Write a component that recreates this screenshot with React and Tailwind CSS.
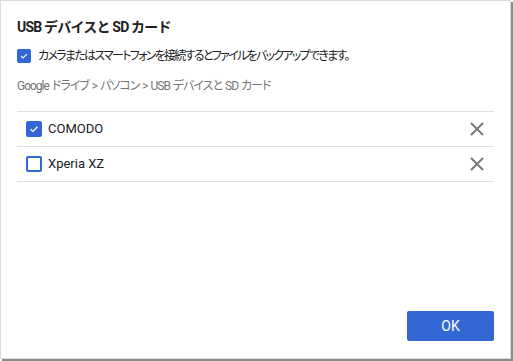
import React, { useState } from 'react';

const font = { fontFamily: 'Roboto, "Noto Sans CJK JP", sans-serif' };

const CheckIcon = () => (
  <svg viewBox="0 0 16 16" className="w-full h-full">
    <path d="M3.5 8.2 L6.6 11.2 L12.6 5" fill="none" stroke="white" strokeWidth="1.8" />
  </svg>
);

const Box = ({ checked, size }) => (
  <div
    className={`${size} rounded-[2px] border-2 border-[#3367d6] flex items-center justify-center ${checked ? 'bg-[#3367d6]' : 'bg-white'}`}
  >
    {checked && <CheckIcon />}
  </div>
);

const Row = ({ label, checked, onToggle }) => (
  <div className="h-[35px] border-b border-[#e0e0e0] flex items-center pl-[9px] pr-[10px]">
    <button onClick={onToggle} className="shrink-0">
      <Box checked={checked} size="w-4 h-4" />
    </button>
    <span className="ml-[6px] text-[13px] text-[#202124] flex-1">{label}</span>
    <svg viewBox="0 0 14 14" className="w-[14px] h-[14px]">
      <path d="M1 1 L13 13 M13 1 L1 13" stroke="#757575" strokeWidth="1.8" />
    </svg>
  </div>
);

export default function App() {
  const [backup, setBackup] = useState(true);
  const [devices, setDevices] = useState([
    { name: 'COMODO', checked: true },
    { name: 'Xperia XZ', checked: false },
  ]);

  return (
    <div className="w-[513px] h-[361px] bg-white" style={font}>
      <div className="w-[511px] h-[359px] border border-[#dcdcdc] shadow-[2px_2px_0_#8c8c8c] flex flex-col px-4">
        <h1 className="mt-[16px] text-[14px] leading-5 font-bold tracking-[-0.8px] text-[#202124]">USB デバイスと SD カード</h1>
        <label className="mt-[11px] flex items-center" onClick={() => setBackup(!backup)}>
          <Box checked={backup} size="w-[14px] h-[14px]" />
          <span className="ml-[7px] text-[12px] leading-4 tracking-[-1.7px] text-[#202124] [font-feature-settings:'palt']">
            カメラまたはスマートフォンを接続するとファイルをバックアップできます。
          </span>
        </label>
        <div className="mt-[14px] text-[12px] leading-4 tracking-[-1px] [word-spacing:1px] text-[#757575] [font-feature-settings:'palt']">
          Google ドライブ &gt; パソコン &gt; USB デバイスと SD カード
        </div>
        <div className="mt-[17px] border-t border-[#e0e0e0]">
          {devices.map((d, i) => (
            <Row
              key={d.name}
              label={d.name}
              checked={d.checked}
              onToggle={() =>
                setDevices(devices.map((x, j) => (j === i ? { ...x, checked: !x.checked } : x)))
              }
            />
          ))}
        </div>
        <div className="flex-1" />
        <div className="flex justify-end mb-[17px]">
          <button className="w-[87px] h-[30px] rounded-[2px] bg-[#3367d6] text-white text-[14px]">OK</button>
        </div>
      </div>
    </div>
  );
}
